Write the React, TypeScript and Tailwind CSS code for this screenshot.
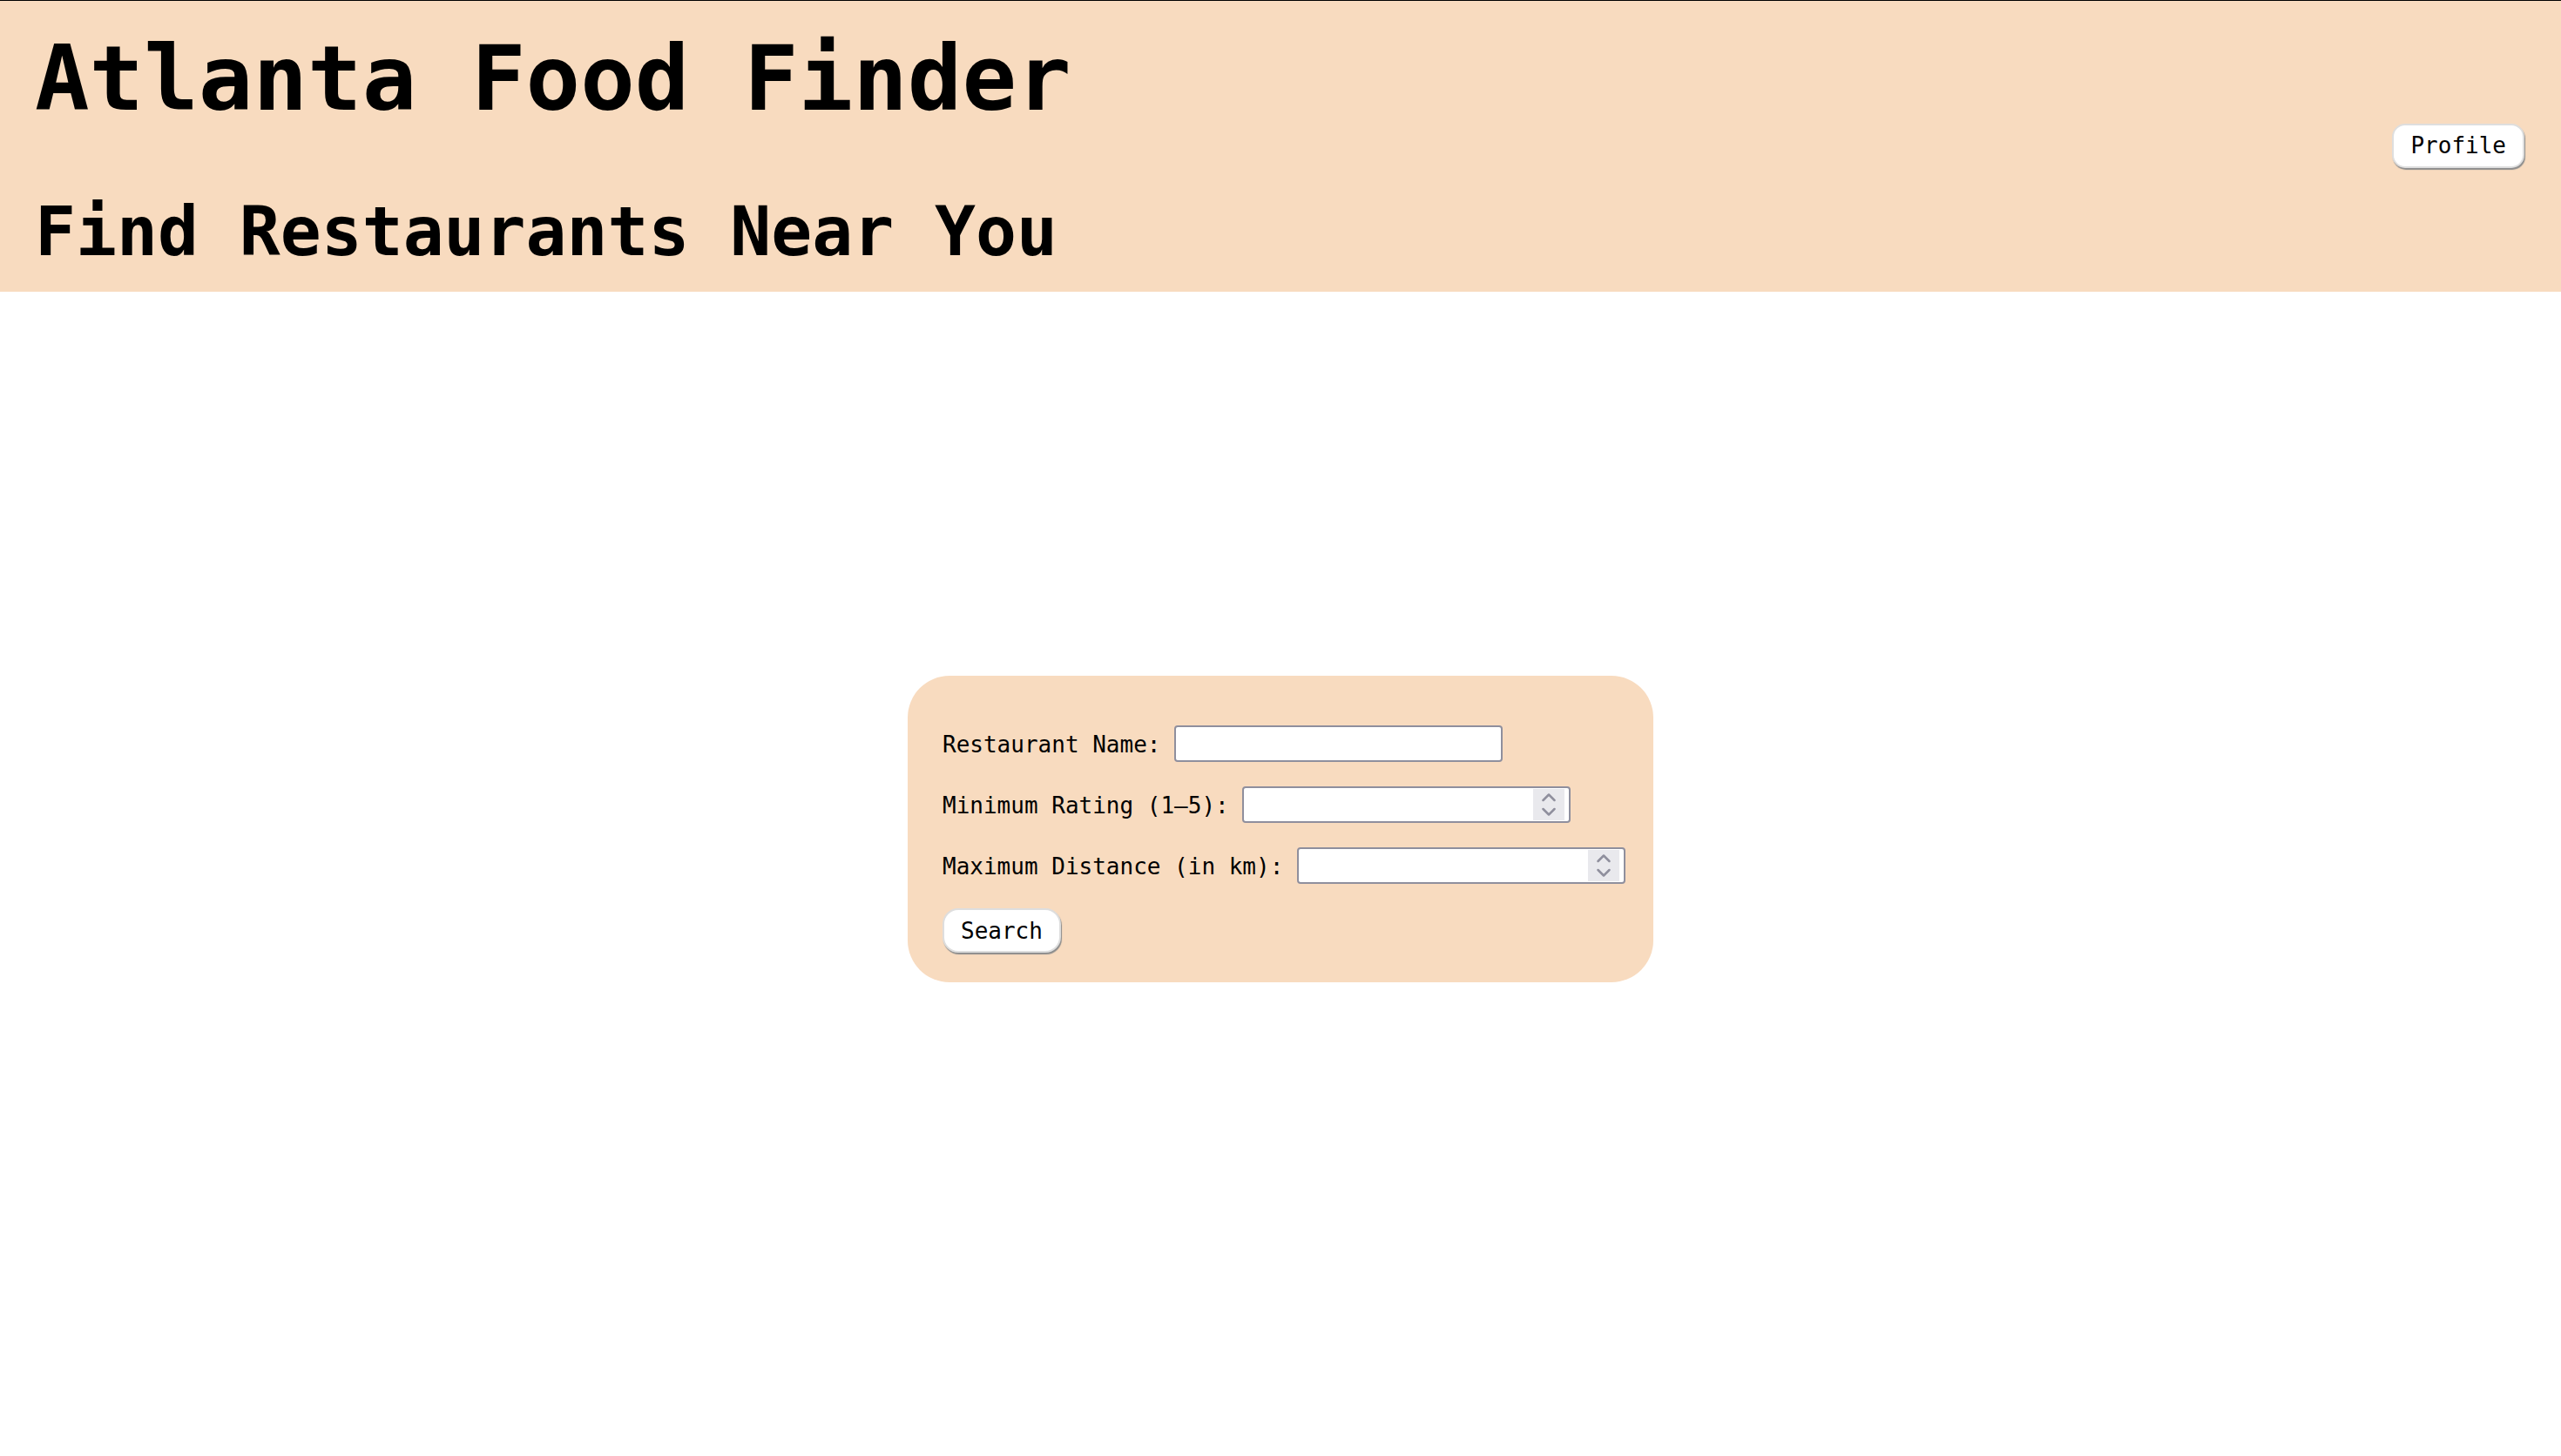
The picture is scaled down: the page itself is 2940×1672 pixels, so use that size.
import React from 'react'

const mono = "font-['DejaVu_Sans_Mono','Liberation_Mono',monospace]"

// Firefox-style spin box drawn next to the number field
function Spinner() {
  return (
    <div className="my-[1px] mr-[5px] flex w-[36px] shrink-0 items-center justify-center bg-[#e9e9ed]">
      <svg width="36" height="36" viewBox="0 0 36 36" fill="none" stroke="#8f8f9d" strokeWidth={2.5} strokeLinecap="round" strokeLinejoin="round">
        <path d="M11.5 13L18 6.5L24.5 13" />
        <path d="M11.5 23L18 29.5L24.5 23" />
      </svg>
    </div>
  )
}

function Field({ label, type = 'text' }: { label: string; type?: 'text' | 'number' }) {
  return (
    <div className="flex items-center gap-[15.65px]">
      <label className="pt-[2px] text-[26px] leading-[30px] whitespace-pre">{label}</label>
      <div className="flex h-[42px] w-[377px] items-stretch rounded-[4px] border-2 border-[#8f8f9d] bg-white">
        <input
          type={type}
          className="min-w-0 flex-1 bg-transparent px-2 text-[26px] outline-none [appearance:textfield] [&::-webkit-inner-spin-button]:appearance-none [&::-webkit-outer-spin-button]:appearance-none"
        />
        {type === 'number' && <Spinner />}
      </div>
    </div>
  )
}

export default function App() {
  return (
    <div className={`min-h-screen bg-white text-black ${mono}`}>
      {/* header */}
      <header className="flex items-center justify-between border-t border-black bg-[#f8dbbf] pl-[40px] pr-[42px]">
        <div className="flex flex-col pt-[37px] pb-[30px]">
          <h1 className="text-[104px] font-bold leading-none">Atlanta Food Finder</h1>
          <h2 className="mt-[85px] text-[78px] font-bold leading-none">Find Restaurants Near You</h2>
        </div>
        <button className="-mt-[2px] h-[51px] rounded-[15px] border-2 border-[#dedede] bg-white px-[19px] text-[26px] leading-none shadow-[1px_2px_1px_#8c8c8c]">
          Profile
        </button>
      </header>

      {/* search form */}
      <form
        className="mx-auto mt-[441px] flex w-[856px] flex-col gap-[28px] rounded-[48px] bg-[#f8dbbf] pt-[57px] pb-[34px] pl-[40px]"
        onSubmit={e => e.preventDefault()}
      >
        <Field label="Restaurant Name:" />
        <Field label="Minimum Rating (1–5):" type="number" />
        <Field label="Maximum Distance (in km):" type="number" />
        <button
          type="submit"
          className="self-start h-[51px] rounded-[18px] border-2 border-[#dedede] bg-white px-[19px] text-[26px] leading-none shadow-[1px_2px_1px_#8c8c8c]"
        >
          Search
        </button>
      </form>
    </div>
  )
}
